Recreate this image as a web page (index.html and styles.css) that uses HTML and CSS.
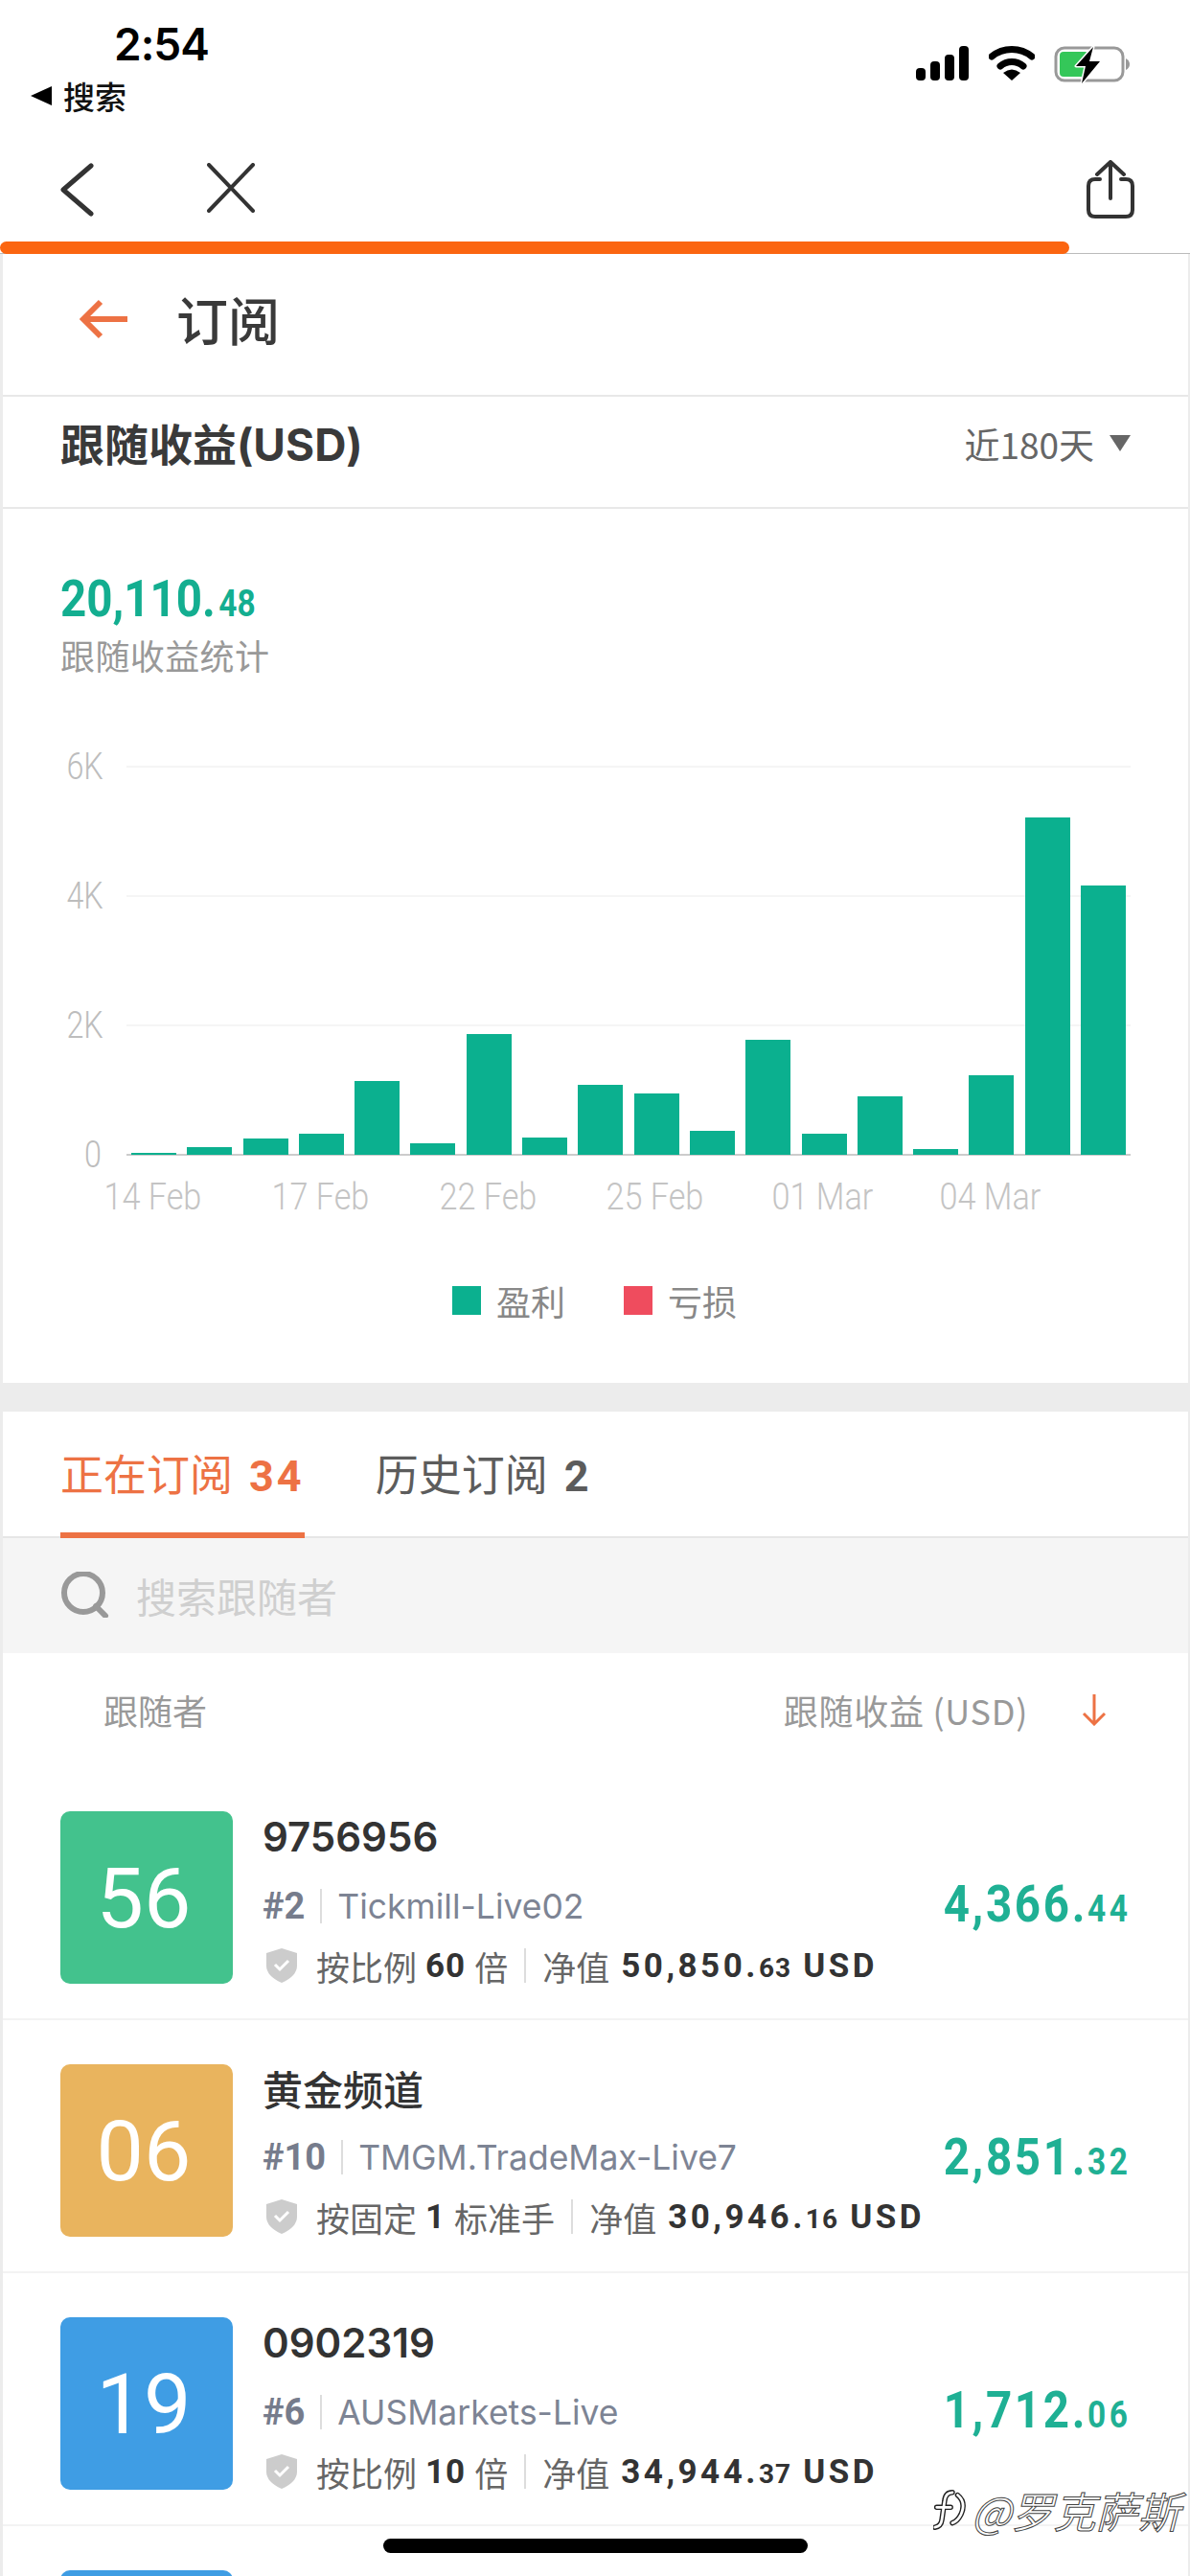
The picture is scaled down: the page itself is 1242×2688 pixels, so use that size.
FILE: index.html
```html
<!DOCTYPE html>
<html lang="zh">
<head>
<meta charset="utf-8">
<title>订阅</title>
<link rel="stylesheet" href="styles.css">
</head>
<body>
<div class="page">
  <header class="status">
    <div class="status-left">
      <div class="time">2:54</div>
      <div class="back-app"><span class="back-tri"></span><span>搜索</span></div>
    </div>
    <div class="status-right">
      <svg width="56" height="36" viewBox="0 0 56 36"><rect x="0" y="23" width="10" height="13" rx="4"/><rect x="15" y="16" width="10" height="20" rx="4"/><rect x="30" y="9" width="10" height="27" rx="4"/><rect x="45" y="0" width="10" height="36" rx="4"/></svg>
      <svg width="48" height="36" viewBox="0 0 48 36"><path d="M3 11C15 1 33 1 45 11" fill="none" stroke="#000" stroke-width="7" stroke-linecap="round"/><path d="M12 21C19 15 29 15 36 21" fill="none" stroke="#000" stroke-width="7" stroke-linecap="round"/><path d="M15 28Q24 21 33 28L24 36Z"/></svg>
      <svg width="80" height="40" viewBox="0 0 80 40"><rect x="2" y="2" width="70" height="34" rx="9" fill="none" stroke="#999" stroke-width="3"/><rect x="6" y="6" width="30" height="26" rx="4" fill="#34c759"/><path d="M75 13Q79 15 79 19Q79 23 75 25Z" fill="#999"/><path d="M41 1L23 21H33L29 39L48 16H37Z" stroke="#fff" stroke-width="3" paint-order="stroke" stroke-linejoin="round"/></svg>
    </div>
  </header>

  <nav class="nav">
    <svg width="36" height="56" viewBox="0 0 36 56"><path d="M33 3L4 28L33 53" fill="none" stroke="#333" stroke-width="5" stroke-linecap="round" stroke-linejoin="round"/></svg>
    <svg class="nav-close" width="50" height="52" viewBox="0 0 50 52"><path d="M2 2L48 50M48 2L2 50" fill="none" stroke="#333" stroke-width="4" stroke-linecap="round"/></svg>
    <svg class="nav-share" width="50" height="62" viewBox="0 0 50 62"><path d="M14 20H9Q2 20 2 27V52Q2 59 9 59H41Q48 59 48 52V27Q48 20 41 20H36" fill="none" stroke="#333" stroke-width="4" stroke-linecap="round"/><path d="M25 40V2M11 15L25 2L39 15" fill="none" stroke="#333" stroke-width="4" stroke-linecap="round" stroke-linejoin="round"/></svg>
  </nav>
  <div class="progress"><div class="progress-fill"></div></div>

  <main class="content">
    <section class="title-bar">
      <svg width="52" height="42" viewBox="0 0 52 42"><path d="M50 21H4M22 3L4 21L22 39" fill="none" stroke="#ed7244" stroke-width="6"/></svg>
      <h1>订阅</h1>
    </section>

    <section class="section-head">
      <h2>跟随收益<span class="h2-latin">(USD)</span></h2>
      <div class="range"><span>近180天</span><span class="range-tri"></span></div>
    </section>

    <section class="summary">
      <div class="total"><span class="din din-left">20,110.<small>48</small></span></div>
      <div class="total-label">跟随收益统计</div>

      <div class="chart">
        <div class="grid-row"><span>6K</span><i></i></div>
        <div class="grid-row"><span>4K</span><i></i></div>
        <div class="grid-row"><span>2K</span><i></i></div>
        <div class="grid-row grid-base"><span>0</span><i></i></div>
        <div class="bars">
          <b style="height:2px"></b><b style="height:8px"></b><b style="height:17px"></b><b style="height:22px"></b><b style="height:77px"></b><b style="height:12px"></b><b style="height:126px"></b><b style="height:18px"></b><b style="height:73px"></b><b style="height:64px"></b><b style="height:25px"></b><b style="height:120px"></b><b style="height:22px"></b><b style="height:61px"></b><b style="height:6px"></b><b style="height:83px"></b><b style="height:352px"></b><b style="height:281px"></b>
        </div>
      </div>
      <div class="x-axis"><span>14 Feb</span><span>17 Feb</span><span>22 Feb</span><span>25 Feb</span><span>01 Mar</span><span>04 Mar</span></div>

      <div class="legend">
        <span class="legend-swatch swatch-profit"></span><span class="legend-text">盈利</span>
        <span class="legend-swatch swatch-loss"></span><span class="legend-text">亏损</span>
      </div>
    </section>

    <div class="band"></div>

    <section class="tabs">
      <div class="tab tab-active">正在订阅<em>34</em></div>
      <div class="tab">历史订阅<em>2</em></div>
    </section>

    <section class="search">
      <svg width="52" height="48" viewBox="0 0 52 48"><circle cx="24" cy="22" r="20" fill="none" stroke="#999" stroke-width="6"/><path d="M37 36L47 46" stroke="#999" stroke-width="6" stroke-linecap="round"/></svg>
      <span>搜索跟随者</span>
    </section>

    <section class="list-head">
      <span>跟随者</span>
      <span class="list-head-right">跟随收益 (USD)</span>
      <svg width="26" height="34" viewBox="0 0 26 34"><path d="M13 1V32M2 21L13 32L24 21" fill="none" stroke="#ed7244" stroke-width="3"/></svg>
    </section>

    <article class="row">
      <div class="avatar av-green">56</div>
      <div class="info">
        <div class="name">9756956</div>
        <div class="meta"><strong>#2</strong><i class="sep"></i><span>Tickmill-Live02</span></div>
        <div class="detail">
          <svg class="shield" width="32" height="36" viewBox="0 0 32 36"><path d="M16 0L32 5V18Q32 29 16 36Q0 29 0 18V5Z" fill="#ccc"/><path d="M9 17L14 22L23 13" fill="none" stroke="#fff" stroke-width="3"/></svg>
          <span>按比例</span><b>60</b><span>倍</span><i class="sep"></i><span>净值</span><b class="money">50,850.<small>63</small> USD</b>
        </div>
      </div>
      <div class="value"><span class="din din-right">4,366.<small>44</small></span></div>
    </article>

    <article class="row">
      <div class="avatar av-orange">06</div>
      <div class="info">
        <div class="name name-cjk">黄金频道</div>
        <div class="meta"><strong>#10</strong><i class="sep"></i><span>TMGM.TradeMax-Live7</span></div>
        <div class="detail">
          <svg class="shield" width="32" height="36" viewBox="0 0 32 36"><path d="M16 0L32 5V18Q32 29 16 36Q0 29 0 18V5Z" fill="#ccc"/><path d="M9 17L14 22L23 13" fill="none" stroke="#fff" stroke-width="3"/></svg>
          <span>按固定</span><b>1</b><span>标准手</span><i class="sep"></i><span>净值</span><b class="money">30,946.<small>16</small> USD</b>
        </div>
      </div>
      <div class="value"><span class="din din-right">2,851.<small>32</small></span></div>
    </article>

    <article class="row">
      <div class="avatar av-blue">19</div>
      <div class="info">
        <div class="name">0902319</div>
        <div class="meta"><strong>#6</strong><i class="sep"></i><span>AUSMarkets-Live</span></div>
        <div class="detail">
          <svg class="shield" width="32" height="36" viewBox="0 0 32 36"><path d="M16 0L32 5V18Q32 29 16 36Q0 29 0 18V5Z" fill="#ccc"/><path d="M9 17L14 22L23 13" fill="none" stroke="#fff" stroke-width="3"/></svg>
          <span>按比例</span><b>10</b><span>倍</span><i class="sep"></i><span>净值</span><b class="money">34,944.<small>37</small> USD</b>
        </div>
      </div>
      <div class="value"><span class="din din-right">1,712.<small>06</small></span></div>
    </article>

    <article class="row">
      <div class="avatar av-blue"></div>
    </article>
  </main>

  <div class="watermark">
    <svg width="40" height="46" viewBox="0 0 44 46"><path d="M22 3Q14 3 13 13L10 34Q9 42 2 43M4 20H20M28 6Q38 14 32 28Q28 36 22 38" fill="none" stroke="#222" stroke-width="6" stroke-linecap="round"/><path d="M22 3Q14 3 13 13L10 34Q9 42 2 43M4 20H20M28 6Q38 14 32 28Q28 36 22 38" fill="none" stroke="#fff" stroke-width="3" stroke-linecap="round"/></svg>
    <span>@罗克萨斯</span>
  </div>
  <div class="home-indicator"></div>
</div>
</body>
</html>
```

FILE: styles.css
```css
* { box-sizing: border-box; }
html, body { margin: 0; padding: 0; background: #fff; }
body { font-family: "Noto Sans CJK SC", "Noto Sans", sans-serif; color: #333; }
h1, h2 { margin: 0; }
em { font-style: normal; }

.page { position: relative; width: 1242px; height: 2688px; overflow: hidden; background: #fff; }

/* condensed numerals */
.din { display: inline-block; flex: none; }
.din-left { transform: scaleX(.88); transform-origin: left center; }
.din-right { transform: scaleX(.88); transform-origin: right center; }

/* status bar */
.status { height: 150px; display: flex; justify-content: space-between; }
.status-left { padding: 16px 0 0 32px; }
.time { font-family: "Inter", "Liberation Sans", sans-serif; font-size: 46px; font-weight: 600; line-height: 60px; color: #000; margin-left: 87px; letter-spacing: -1px; }
.back-app { display: flex; align-items: center; gap: 12px; margin-top: 4px; font-size: 33px; font-weight: 500; line-height: 40px; color: #111; }
.back-tri { width: 0; height: 0; border-style: solid; border-width: 10px 22px 10px 0; border-color: transparent #000 transparent transparent; }
.status-right { display: flex; gap: 20px; padding: 48px 62px 0 0; align-items: flex-start; }

/* browser nav */
.nav { height: 102px; display: flex; align-items: flex-start; padding: 17px 58px 0 62px; }
.nav > svg { margin-top: 3px; }
.nav-close { margin-left: 118px; }
.nav .nav-share { margin-left: auto; margin-top: 0; }
.progress { height: 13px; border-bottom: 1px solid #bbb; }
.progress-fill { width: 1116px; height: 13px; background: #fb6510; border-radius: 7px; }

/* page */
.content { border-left: 3px solid #ececec; border-right: 2px solid #ececec; }
.title-bar { height: 149px; display: flex; align-items: center; gap: 49px; padding: 0 0 12px 80px; border-bottom: 2px solid #e8e8e8; }
.title-bar h1 { font-size: 54px; font-weight: 500; line-height: 70px; color: #3a3a3a; }
.section-head { height: 117px; display: flex; justify-content: space-between; align-items: center; padding: 0 60px 18px 60px; border-bottom: 2px solid #e8e8e8; }
.section-head h2 { font-size: 46px; font-weight: 700; line-height: 60px; color: #3a3a3a; }
.h2-latin { font-family: "Inter", sans-serif; font-size: 46px; }
.range { display: flex; align-items: center; gap: 16px; font-size: 37px; line-height: 50px; color: #666; }
.range-tri { width: 0; height: 0; border-style: solid; border-width: 17px 11px 0 11px; border-color: #666 transparent transparent transparent; }

.summary { height: 912px; padding: 66px 60px 0 60px; }
.total { font-family: "Roboto", sans-serif; font-size: 54px; font-weight: 700; line-height: 56px; color: #13ae90; letter-spacing: 0; }
.total small { font-size: 38px; margin-left: 4px; }
.total-label { font-size: 36px; line-height: 50px; color: #999; letter-spacing: .4px; }

.chart { position: relative; height: 405px; margin-top: 92px; display: flex; flex-direction: column; justify-content: space-between; }
.grid-row { height: 0; display: flex; align-items: center; gap: 26px; }
.grid-row span { width: 43px; font-family: "Roboto", sans-serif; font-weight: 300; font-size: 38px; text-align: right; color: #bdbdbd; transform: scaleX(.85); transform-origin: right center; }
.grid-row i { flex: 1; height: 2px; background: #f5f5f5; }
.grid-base i { background: #ccc; }
.bars { position: absolute; left: 74px; bottom: 0; display: flex; align-items: flex-end; gap: 11.3px; }
.bars b { display: block; width: 47px; background: #0bb08f; }
.x-axis { display: flex; padding-left: 9px; margin-top: 20px; }
.x-axis span { width: 174.8px; text-align: center; font-family: "Roboto", sans-serif; font-weight: 300; font-size: 38px; line-height: 48px; color: #c4c4c4; transform: scaleX(.9); white-space: nowrap; }

.legend { display: flex; align-items: center; padding-left: 409px; margin-top: 60px; }
.legend-swatch { width: 30px; height: 30px; }
.swatch-profit { background: #0bb08f; }
.swatch-loss { background: #ef4c5e; margin-left: 61px; }
.legend-text { margin-left: 16px; font-size: 36px; line-height: 48px; color: #888; }

.band { height: 30px; background: #ececec; }

/* tabs */
.tabs { height: 132px; display: flex; gap: 74px; padding-left: 60px; border-bottom: 2px solid #e6e6e6; }
.tab { height: 132px; padding-top: 34px; font-size: 45px; line-height: 60px; color: #5c5c5c; white-space: nowrap; }
.tab em { font-family: "Roboto", sans-serif; font-weight: 700; letter-spacing: 3px; margin-left: 17px; }
.tab-active { color: #ed7244; border-bottom: 6px solid #ed7244; }

.search { height: 120px; display: flex; align-items: center; gap: 27px; padding: 0 0 2px 60px; background: #f5f5f5; }
.search span { font-size: 42px; color: #cfcfcf; }

.list-head { height: 119px; display: flex; align-items: center; padding: 0 85px 2px 105px; font-size: 36px; color: #999; }
.list-head-right { margin-left: auto; margin-right: 56px; letter-spacing: .7px; }

/* rows */
.row { height: 264px; padding: 46px 60px 0 60px; display: flex; border-bottom: 2px solid #f3f3f3; }
.avatar { flex: none; width: 180px; height: 180px; border-radius: 10px; padding-right: 6px; display: flex; align-items: center; justify-content: center; font-family: "Roboto", sans-serif; font-size: 88px; color: #fff; }
.av-green { background: #43c28d; }
.av-orange { background: #e9b45e; }
.av-blue { background: #3f9de4; }
.info { flex: 1; min-width: 0; margin-left: 31px; }
.name { font-family: "Inter", "Noto Sans CJK SC", sans-serif; font-size: 42px; font-weight: 600; line-height: 54px; color: #333; white-space: nowrap; }
.name-cjk { font-family: "Noto Sans CJK SC", sans-serif; font-weight: 500; margin-top: -2px; margin-bottom: 2px; }
.meta { display: flex; align-items: center; height: 72px; margin-top: 9px; font-family: "Inter", sans-serif; font-size: 35.5px; color: #7d8494; white-space: nowrap; }
.meta strong { font-family: "Roboto", sans-serif; font-weight: 700; font-size: 38px; color: #767c8c; }
.meta .sep { margin: 0 16px; }
.sep { display: block; width: 2px; height: 36px; background: #ddd; }
.detail { display: flex; align-items: center; height: 52px; font-size: 35px; color: #666; white-space: nowrap; }
.shield { flex: none; margin: 0 20px 0 4px; }
.detail b { font-family: "Roboto", sans-serif; font-weight: 700; font-size: 35px; color: #333; margin: 0 9px; letter-spacing: 1px; }
.detail .sep { flex: none; margin: 0 17px; }
.detail .money { letter-spacing: 3.5px; margin: 0 0 0 12px; }
.money small { font-size: 28px; letter-spacing: 1px; }
.value { flex: none; width: 195px; display: flex; justify-content: flex-end; margin-top: 22px; height: 180px; line-height: 150px; font-family: "Roboto", sans-serif; font-weight: 700; font-size: 54px; color: #1fb094; letter-spacing: 3px; white-space: nowrap; }
.value small { font-size: 38px; letter-spacing: 4px; }

/* overlays */
.watermark { position: absolute; left: 974px; top: 2594px; display: flex; align-items: center; gap: 0; color: #fff; font-size: 44px; font-style: italic; line-height: 50px; -webkit-text-stroke: 1px #444; white-space: nowrap; }
.home-indicator { position: absolute; left: 400px; top: 2649px; width: 443px; height: 15px; border-radius: 8px; background: #000; }
```
